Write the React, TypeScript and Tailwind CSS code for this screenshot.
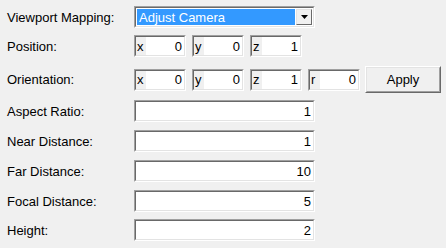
import React from 'react'

const font = { fontFamily: '"Liberation Sans", Arial, sans-serif' }

function Sunken({ className = '', children }: { className?: string; children?: React.ReactNode }) {
  return (
    <div className={`border border-t-[#a0a0a0] border-l-[#a0a0a0] border-b-white border-r-white ${className}`}>
      <div className="h-full w-full border border-t-[#696969] border-l-[#696969] border-b-[#e3e3e3] border-r-[#e3e3e3]">
        {children}
      </div>
    </div>
  )
}

function AxisField({ axis, value }: { axis: string; value: string }) {
  return (
    <Sunken className="h-[22px] w-[52px]">
      <div className="flex h-full">
        <span className="flex w-[10px] items-center bg-[#f0f0f0] pl-[1px] leading-none">{axis}</span>
        <span className="flex flex-1 items-center justify-end bg-white pr-[2px] leading-none">{value}</span>
      </div>
    </Sunken>
  )
}

function NumberField({ value }: { value: string }) {
  return (
    <Sunken className="h-[22px] w-[181px]">
      <div className="flex h-full items-center justify-end bg-white pr-[2px] leading-none">{value}</div>
    </Sunken>
  )
}

function Row({ label, className = '', children }: { label: string; className?: string; children: React.ReactNode }) {
  return (
    <div className={`flex items-center ${className}`}>
      <span className="w-[127px] shrink-0 leading-none">{label}</span>
      {children}
    </div>
  )
}

export default function App() {
  const scalars = [
    { label: 'Aspect Ratio:', value: '1', mt: 'mt-[7px]' },
    { label: 'Near Distance:', value: '1', mt: 'mt-[8px]' },
    { label: 'Far Distance:', value: '10', mt: 'mt-[8px]' },
    { label: 'Focal Distance:', value: '5', mt: 'mt-[8px]' },
    { label: 'Height:', value: '2', mt: 'mt-[7px]' },
  ]

  return (
    <div className="h-[248px] w-[446px] overflow-hidden bg-[#f0f0f0] pl-[7px] pt-[6px] text-[13px] text-black" style={font}>
      <Row label="Viewport Mapping:">
        <Sunken className="h-[22px] w-[181px]">
          <div className="flex h-full bg-white p-[1px]">
            <div className="flex flex-1 items-center bg-[#3399ff] pl-[2px] leading-none text-white">Adjust Camera</div>
            <div className="ml-[1px] flex w-[16px] items-center justify-center border border-t-[#e3e3e3] border-l-[#e3e3e3] border-b-[#696969] border-r-[#696969] bg-[#f0f0f0]">
              <svg width="7" height="4" viewBox="0 0 7 4">
                <path d="M0 0h7L3.5 4z" fill="#000" />
              </svg>
            </div>
          </div>
        </Sunken>
      </Row>

      <Row label="Position:" className="mt-[7px]">
        <div className="flex gap-[6px]">
          <AxisField axis="x" value="0" />
          <AxisField axis="y" value="0" />
          <AxisField axis="z" value="1" />
        </div>
      </Row>

      <Row label="Orientation:" className="mt-[9px]">
        <div className="flex items-center gap-[6px]">
          <AxisField axis="x" value="0" />
          <AxisField axis="y" value="0" />
          <AxisField axis="z" value="1" />
          <AxisField axis="r" value="0" />
          <button className="ml-[-1px] h-[27px] w-[76px] border border-t-white border-l-white border-b-[#696969] border-r-[#696969] bg-[#f0f0f0] leading-none">
            <span className="flex h-full w-full items-center justify-center border border-t-[#e3e3e3] border-l-[#e3e3e3] border-b-[#a0a0a0] border-r-[#a0a0a0]">
              Apply
            </span>
          </button>
        </div>
      </Row>

      {scalars.map((s) => (
        <Row key={s.label} label={s.label} className={s.mt}>
          <NumberField value={s.value} />
        </Row>
      ))}
    </div>
  )
}
